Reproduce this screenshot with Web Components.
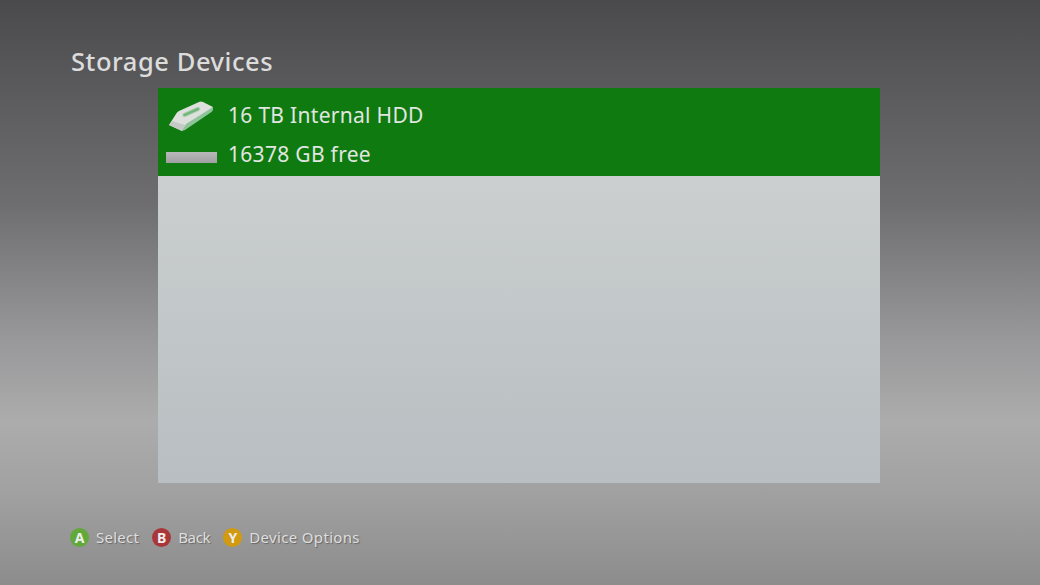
<!DOCTYPE html>
<html><head><meta charset="utf-8"><style>
html,body{margin:0;padding:0;width:1040px;height:585px;overflow:hidden}
</style></head><body>
<x-screen>
  <span slot="title">Storage Devices</span>
  <x-device name="16 TB Internal HDD" free="16378 GB free"></x-device>
  <x-hint slot="hints" btn="A" color="#62a83a">Select</x-hint>
  <x-hint slot="hints" btn="B" color="#a9373a" style="letter-spacing:-.3px">Back</x-hint>
  <x-hint slot="hints" btn="Y" color="#d19a10" style="letter-spacing:.33px">Device Options</x-hint>
</x-screen>
<script>
class XScreen extends HTMLElement{constructor(){super();this.attachShadow({mode:'open'}).innerHTML=`<style>
:host{display:flex;flex-direction:column;width:1040px;height:585px;box-sizing:border-box;font-family:"Noto Sans","Open Sans",sans-serif;
background:linear-gradient(180deg,#4a4a4c 0,#555557 10%,#6e6e70 35%,#98989a 58%,#acacac 72%,#a0a0a0 85%,#8c8c8c 100%)}
.t{height:88px;box-sizing:border-box;padding:43px 0 0 71px;font-size:25.5px;line-height:36px;color:#dcdcdc;letter-spacing:.55px;font-weight:500}
.p{margin-left:158px;width:722px;height:395px;background:linear-gradient(180deg,#d0d4d4,#b8bec1)}
.h{display:flex;align-items:center;gap:13px;padding:36px 0 0 70px;height:36px}
</style><div class="t"><slot name="title"></slot></div><div class="p"><slot></slot></div><div class="h"><slot name="hints"></slot></div>`}}
class XDevice extends HTMLElement{constructor(){super();this.attachShadow({mode:'open'}).innerHTML=`<style>
:host{display:grid;grid-template-columns:70px 1fr;grid-template-rows:54px 34px;height:88px;background:#0f7a10;color:#e1e6e1;font-size:21px;letter-spacing:.3px}
.i{padding:10px 0 0 7px;box-sizing:border-box}
.b{display:flex;align-items:center;padding:0 0 3px 8px}
.n{line-height:54px}.f{line-height:24px}
.bar{width:51px;height:11px;background:linear-gradient(180deg,#b8b8ba,#a0a0a2)}
svg{display:block}
</style><div class="i"><svg width="54" height="38" viewBox="0 0 54 38">
<path d="M4 27 L11 16 Q12 14 14 13 L34 4 Q36 3 38 4 L48 9 L46 12 L21 27 L17 33 Z" fill="#dde0dd"/>
<path d="M48 9 L48 12 Q47 14 45 15 L20 32 L17 33 L21 26 Z" fill="#8fc49a"/>
<path d="M4 27 L17 33 L20 27 L7 23 Z" fill="#c6cac6"/>
<path d="M19.5 17 L33 11" stroke="#b4d4b8" stroke-width="4.5" stroke-linecap="round" fill="none"/>
<path d="M19.5 17 L33 11" stroke="#74b67e" stroke-width="2.5" stroke-linecap="round" fill="none"/>
</svg></div><div class="n">${this.getAttribute('name')}</div>
<div class="b"><div class="bar"></div></div><div class="f">${this.getAttribute('free')}</div>`}}
class XHint extends HTMLElement{constructor(){super();this.attachShadow({mode:'open'}).innerHTML=`<style>
:host{display:inline-flex;align-items:center;gap:7px;color:#dedede;font-size:15px;letter-spacing:.25px;text-shadow:1px 1px 1px #666}
.c{width:19px;height:19px;border-radius:50%;background:${this.getAttribute('color')};color:#eee;font-size:14px;font-weight:700;letter-spacing:0;display:flex;align-items:center;justify-content:center;text-shadow:none}
</style><span class="c">${this.getAttribute('btn')}</span><span><slot></slot></span>`}}
customElements.define('x-screen',XScreen);customElements.define('x-device',XDevice);customElements.define('x-hint',XHint);
</script></body></html>
